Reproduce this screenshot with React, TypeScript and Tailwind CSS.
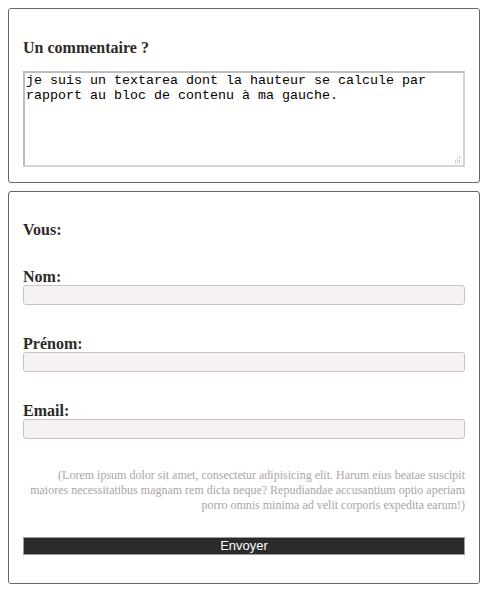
const serif = "font-['Liberation_Serif','DejaVu_Serif',serif]";

function Field({ label }: { label: string }) {
  return (
    <div className="mt-[31px]">
      <label className={`block text-[16px] leading-[16px] font-bold text-[#2e2a28] ${serif}`}>
        {label}
      </label>
      <input
        type="text"
        className="block h-[20px] w-full rounded-[3px] border border-[#cbc3c3] bg-[#f6f2f2] outline-none"
      />
    </div>
  );
}

export default function App() {
  return (
    <div className="bg-white p-2">
      <section className="rounded-[3px] border border-[#666] px-[14px] pt-[29px] pb-[15px]">
        <h3 className={`text-[16px] leading-[20px] font-bold text-[#2e2a28] ${serif}`}>
          Un commentaire ?
        </h3>
        <div className="relative mt-[13px]">
          <textarea
            className="block h-[96px] w-full resize-none border-2 border-[#d4d4d4] border-t-[#bdbdbd] border-l-[#bdbdbd] px-[1px] py-0 font-['Liberation_Mono',monospace] text-[13.333px] leading-[15px] text-black outline-none"
            defaultValue="je suis un textarea dont la hauteur se calcule par rapport au bloc de contenu à ma gauche."
          />
          <svg className="pointer-events-none absolute right-[4px] bottom-[4px]" width="7" height="7" viewBox="0 0 7 7">
            <g fill="#b5b5b5">
              <rect x="5" y="0" width="1" height="1" />
              <rect x="3" y="2" width="1" height="1" />
              <rect x="5" y="2" width="1" height="1" />
              <rect x="1" y="4" width="1" height="1" />
              <rect x="3" y="4" width="1" height="1" />
              <rect x="5" y="4" width="1" height="1" />
              <rect x="1" y="6" width="1" height="1" />
              <rect x="3" y="6" width="1" height="1" />
              <rect x="5" y="6" width="1" height="1" />
            </g>
          </svg>
        </div>
      </section>

      <section className="mt-[8px] rounded-[3px] border border-[#666] px-[14px] pt-[30px] pb-[28px]">
        <h3 className={`text-[16px] leading-[16px] font-bold text-[#2e2a28] ${serif}`}>Vous:</h3>
        <div className="mt-[1px]">
          <Field label="Nom:" />
          <Field label="Prénom:" />
          <Field label="Email:" />
        </div>
        <p className={`mt-[29px] text-right text-[12px] leading-[15px] whitespace-nowrap text-[#aaa5a5] ${serif}`}>
          (Lorem ipsum dolor sit amet, consectetur adipisicing elit. Harum eius beatae suscipit
          <br />
          maiores necessitatibus magnam rem dicta neque? Repudiandae accusantium optio aperiam
          <br />
          porro omnis minima ad velit corporis expedita earum!)
        </p>
        <button
          type="submit"
          className="mt-[24px] block h-[18px] w-full border border-[#9a9a9a] bg-[#2b2b2b] font-['Liberation_Sans',Arial,sans-serif] text-[13px] leading-[16px] text-white"
        >
          Envoyer
        </button>
      </section>
    </div>
  );
}
